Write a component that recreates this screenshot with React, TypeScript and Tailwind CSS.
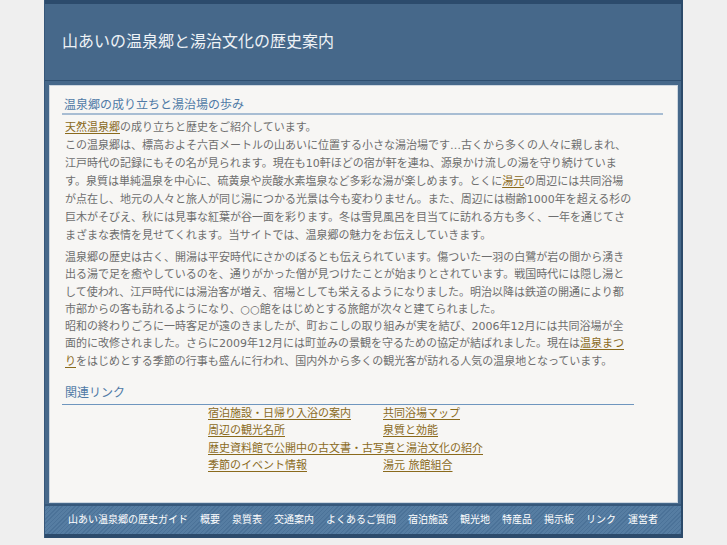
const links = [
  { name: "宿泊施設・日帰り入浴の案内", span: false },
  { name: "共同浴場マップ", span: false },
  { name: "周辺の観光名所", span: false },
  { name: "泉質と効能", span: false },
  { name: "歴史資料館で公開中の古文書・古写真と湯治文化の紹介", span: true },
  { name: "季節のイベント情報", span: false },
  { name: "湯元 旅館組合", span: false },
];

const footerLinks = [
  "山あい温泉郷の歴史ガイド",
  "概要",
  "泉質表",
  "交通案内",
  "よくあるご質問",
  "宿泊施設",
  "観光地",
  "特産品",
  "掲示板",
  "リンク",
  "運営者",
];

const linkClass = "text-[#8a6a1c] underline underline-offset-2";

export default function App() {
  return (
    <div className="min-h-screen bg-[#efefef] font-['DejaVu_Sans','Noto_Sans_CJK_JP',sans-serif]">
      <div className="mx-auto w-[639px] border-l border-r-2 border-l-[#36577a] border-r-[#2b4a6a] bg-[#46688a]">
        <div className="h-[4px] bg-[#2c4b6c]" />
        <header className="flex h-[76px] items-center pl-[17px]">
          <h1 className="text-[16px] leading-none text-[#eef2f6]">山あいの温泉郷と湯治文化の歴史案内</h1>
        </header>
        <div className="h-px bg-[#2f4f70]" />

        <div className="pl-[4px] pr-[3px] pt-[4px] pb-px">
          <main className="border border-[#cdd6df] bg-[#f7f6f4] pl-[12px] pr-[14px] pt-[11px] pb-[28px]">
            <h2 className="border-b-2 border-[#a8bdd3] pl-[2px] text-[12px] leading-[16px] text-[#4f7aa6]">
              温泉郷の成り立ちと湯治場の歩み
            </h2>

            <div className="pl-[3px] pr-[30px] text-[11px] text-[#6e6e6e]">
              <p className="mt-[4px] leading-[18px]">
                <a href="#" className={linkClass}>天然温泉郷</a>の成り立ちと歴史をご紹介しています。
                <br />
                この温泉郷は、標高およそ六百メートルの山あいに位置する小さな湯治場です…古くから多くの人々に親しまれ、江戸時代の記録にもその名が見られます。現在も10軒ほどの宿が軒を連ね、源泉かけ流しの湯を守り続けています。泉質は単純温泉を中心に、硫黄泉や炭酸水素塩泉など多彩な湯が楽しめます。とくに
                <a href="#" className={linkClass}>湯元</a>
                の周辺には共同浴場が点在し、地元の人々と旅人が同じ湯につかる光景は今も変わりません。また、周辺には樹齢1000年を超える杉の巨木がそびえ、秋には見事な紅葉が谷一面を彩ります。冬は雪見風呂を目当てに訪れる方も多く、一年を通じてさまざまな表情を見せてくれます。当サイトでは、温泉郷の魅力をお伝えしていきます。
              </p>

              <p className="mt-[4px] leading-[17.3px]">
                温泉郷の歴史は古く、開湯は平安時代にさかのぼるとも伝えられています。傷ついた一羽の白鷺が岩の間から湧き出る湯で足を癒やしているのを、通りがかった僧が見つけたことが始まりとされています。戦国時代には隠し湯として使われ、江戸時代には湯治客が増え、宿場としても栄えるようになりました。明治以降は鉄道の開通により都市部からの客も訪れるようになり、○○館をはじめとする旅館が次々と建てられました。
                <br />
                昭和の終わりごろに一時客足が遠のきましたが、町おこしの取り組みが実を結び、2006年12月には共同浴場が全面的に改修されました。さらに2009年12月には町並みの景観を守るための協定が結ばれました。現在は
                <a href="#" className={linkClass}>温泉まつり</a>
                をはじめとする季節の行事も盛んに行われ、国内外から多くの観光客が訪れる人気の温泉地となっています。
              </p>
            </div>

            <h2 className="mt-[15px] mr-[29px] border-b border-[#6f96be] pb-[3px] pl-[3px] text-[12px] leading-[16px] text-[#4f7aa6]">
              関連リンク
            </h2>
            <div className="ml-[146px] grid grid-cols-[175px_auto] text-[11px] leading-[17.3px]">
              {links.map((l, i) => (
                <div key={i} className={l.span ? "col-span-2" : ""}>
                  <a href="#" className={linkClass}>{l.name}</a>
                </div>
              ))}
            </div>
          </main>
        </div>

        <footer className="flex h-[30px] items-center justify-center gap-[12px] border-t-2 border-[#36587b] bg-[repeating-linear-gradient(135deg,#4b7298_0px,#4b7298_1px,#567da2_1px,#567da2_3px)] text-[10px] leading-none text-white">
          {footerLinks.map((f, i) => (
            <a key={i} href="#">{f}</a>
          ))}
        </footer>
        <div className="h-[4px] bg-[#2c4b6c]" />
      </div>
    </div>
  );
}
